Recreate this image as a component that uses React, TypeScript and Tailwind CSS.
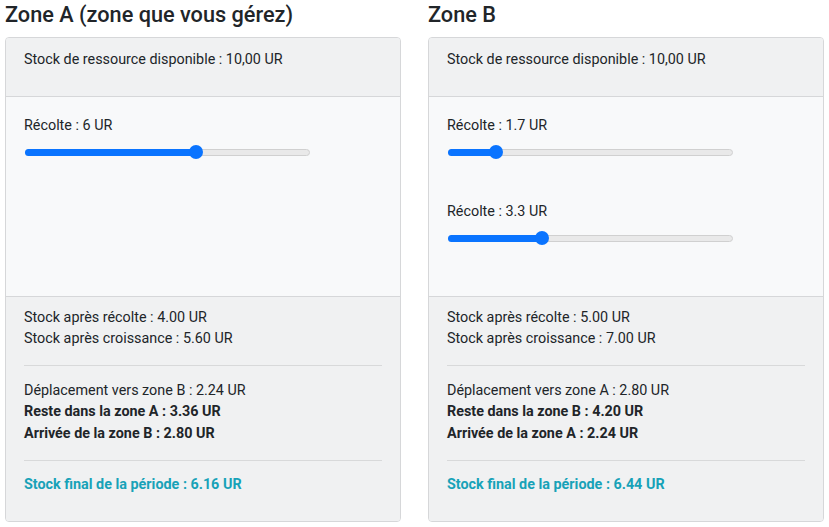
import React from "react";

function Slider({ value, max = 10 }: { value: number; max?: number }) {
  const pct = (value / max) * 100;
  return (
    <div className="relative mt-[9px] h-[14px] w-[80%]">
      <div className="absolute left-0 right-0 top-[4px] h-[7px] rounded-full border border-[#d0d0d0] bg-[#e9e9e9]" />
      <div
        className="absolute left-0 top-[4px] h-[7px] rounded-full bg-[#0a74ff]"
        style={{ width: `${pct}%` }}
      />
      <div
        className="absolute top-0 h-[14px] w-[14px] -translate-x-1/2 rounded-full bg-[#0a74ff]"
        style={{ left: `${pct}%` }}
      />
    </div>
  );
}

function Zone({
  title,
  harvests,
  afterHarvest,
  afterGrowth,
  move,
  stay,
  arrive,
  final,
}: {
  title: string;
  harvests: number[];
  afterHarvest: string;
  afterGrowth: string;
  move: string;
  stay: string;
  arrive: string;
  final: string;
}) {
  return (
    <div className="flex w-[396px] flex-col">
      <h4 className="h-[37px] pt-[3px] text-[21.7px] font-medium leading-[24px] text-[#212529]">{title}</h4>
      <div className="flex flex-1 flex-col overflow-hidden rounded-[4px] border border-[#d6d7d9] bg-[#f8f9fa]">
        <div className="border-b border-[#d6d7d9] bg-[#f0f1f2] px-[18px] pb-[26px] pt-[11px]">
          <p className="leading-[21px]">Stock de ressource disponible : 10,00 UR</p>
        </div>
        <div className="flex flex-1 flex-col gap-[42px] px-[19px] pb-[50px] pt-[18px]">
          {harvests.map((h, i) => (
            <div key={i}>
              <p className="-ml-px leading-[21px]">Récolte : {h} UR</p>
              <Slider value={h} />
            </div>
          ))}
        </div>
        <div className="border-t border-[#d6d7d9] bg-[#f0f1f2] px-[18px] pb-[26px] pt-[10px]">
          <p className="leading-[21px]">Stock après récolte : {afterHarvest} UR</p>
          <p className="leading-[21px]">Stock après croissance : {afterGrowth} UR</p>
          <hr className="mb-[14px] mt-[16px] border-t border-[#d8d9da]" />
          <p className="leading-[21.5px]">{move}</p>
          <p className="font-bold leading-[21.5px]">{stay}</p>
          <p className="font-bold leading-[21.5px]">{arrive}</p>
          <hr className="mb-[13px] mt-[16px] border-t border-[#d8d9da]" />
          <p className="font-bold leading-[21px] text-[#17a2b8]">Stock final de la période : {final} UR</p>
        </div>
      </div>
    </div>
  );
}

export default function App() {
  return (
    <div
      className="flex h-[527px] w-[829px] gap-[27px] bg-white px-[5px] pb-[5px] text-[14.35px] text-[#212529]"
      style={{ fontFamily: "Roboto, 'Liberation Sans', sans-serif" }}
    >
      <Zone
        title="Zone A (zone que vous gérez)"
        harvests={[6]}
        afterHarvest="4.00"
        afterGrowth="5.60"
        move="Déplacement vers zone B : 2.24 UR"
        stay="Reste dans la zone A : 3.36 UR"
        arrive="Arrivée de la zone B : 2.80 UR"
        final="6.16"
      />
      <Zone
        title="Zone B"
        harvests={[1.7, 3.3]}
        afterHarvest="5.00"
        afterGrowth="7.00"
        move="Déplacement vers zone A : 2.80 UR"
        stay="Reste dans la zone B : 4.20 UR"
        arrive="Arrivée de la zone A : 2.24 UR"
        final="6.44"
      />
    </div>
  );
}
